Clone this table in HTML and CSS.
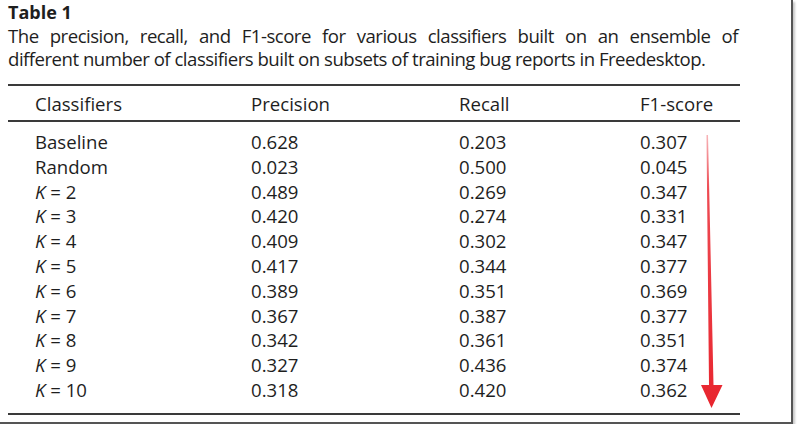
FILE: index.html
```html
<!DOCTYPE html>
<html>
<head>
<meta charset="utf-8">
<link rel="stylesheet" href="styles.css">
</head>
<body>
<div class="frame">
  <div class="content">
    <div class="title">Table 1</div>
    <p class="caption">The precision, recall, and F1-score for various classifiers built on an ensemble of different&nbsp;number of classifiers built on subsets of training bug reports in Freedesktop.</p>
    <table class="data">
      <thead>
        <tr><th class="c1">Classifiers</th><th class="c2">Precision</th><th class="c3">Recall</th><th class="c4">F1-score</th><th class="c5"></th></tr>
      </thead>
      <tbody>
        <tr class="first"><td>Baseline</td><td>0.628</td><td>0.203</td><td>0.307</td><td></td></tr>
        <tr><td>Random</td><td>0.023</td><td>0.500</td><td>0.045</td><td></td></tr>
        <tr><td><i>K</i> = 2</td><td>0.489</td><td>0.269</td><td>0.347</td><td></td></tr>
        <tr><td><i>K</i> = 3</td><td>0.420</td><td>0.274</td><td>0.331</td><td></td></tr>
        <tr><td><i>K</i> = 4</td><td>0.409</td><td>0.302</td><td>0.347</td><td></td></tr>
        <tr><td><i>K</i> = 5</td><td>0.417</td><td>0.344</td><td>0.377</td><td></td></tr>
        <tr><td><i>K</i> = 6</td><td>0.389</td><td>0.351</td><td>0.369</td><td></td></tr>
        <tr><td><i>K</i> = 7</td><td>0.367</td><td>0.387</td><td>0.377</td><td></td></tr>
        <tr><td><i>K</i> = 8</td><td>0.342</td><td>0.361</td><td>0.351</td><td></td></tr>
        <tr><td><i>K</i> = 9</td><td>0.327</td><td>0.436</td><td>0.374</td><td></td></tr>
        <tr class="last"><td><i>K</i> = 10</td><td>0.318</td><td>0.420</td><td>0.362</td><td></td></tr>
      </tbody>
    </table>
  </div>
  <svg class="arrow" width="30" height="280" viewBox="0 0 30 280">
    <defs>
      <linearGradient id="g" x1="0" y1="0" x2="0" y2="1">
        <stop offset="0" stop-color="#f7b4b8"/>
        <stop offset="0.2" stop-color="#ee4a52"/>
        <stop offset="1" stop-color="#e8252e"/>
      </linearGradient>
    </defs>
    <polygon points="9.5,0 11,0 16.5,250 25.5,250 14.5,273 4,250 12,250" fill="url(#g)"/>
  </svg>
</div>
</body>
</html>
```

FILE: styles.css
```css
html, body {
  margin: 0;
  padding: 0;
  background: #ffffff;
}
.frame {
  position: relative;
  width: 793px;
  height: 424px;
  box-sizing: border-box;
  border-right: 2px solid #555;
  border-bottom: 2px solid #555;
  box-shadow: 2px 2px 2px #c8c8c8;
  background: #fff;
  overflow: hidden;
}
.content {
  padding: 2px 0 0 8px;
  width: 732px;
  font-family: "Open Sans", "Noto Sans", sans-serif;
  color: #1e1e1e;
}
.title {
  font-weight: bold;
  font-size: 18px;
  line-height: 21px;
}
.caption {
  margin: 1px 0 0 0;
  font-size: 18.6px;
  line-height: 23px;
  letter-spacing: -0.5px;
  text-align: justify;
  width: 730px;
}
.data {
  margin-top: 14px;
  border-collapse: collapse;
  width: 732px;
  font-size: 18.6px;
  border-top: 2px solid #3a3a3a;
  border-bottom: 2px solid #3a3a3a;
}
.data th {
  font-weight: normal;
  text-align: left;
  height: 34px;
  padding: 0;
  border-bottom: 2px solid #3a3a3a;
  vertical-align: middle;
}
.data td {
  padding: 0;
  height: 24.8px;
  line-height: 24.8px;
  text-align: left;
}
.data th.c1 { width: 216px; padding-left: 27px; }
.data th.c2 { width: 208px; }
.data th.c3 { width: 181px; }
.data th.c4 { width: 100px; }
.data th.c5 { width: 0; }
.data td:first-child { padding-left: 27px; }
.data tr.first td { padding-top: 8px; }
.data tr.last td { padding-bottom: 10px; }
.arrow {
  position: absolute;
  left: 697px;
  top: 135px;
}
```
